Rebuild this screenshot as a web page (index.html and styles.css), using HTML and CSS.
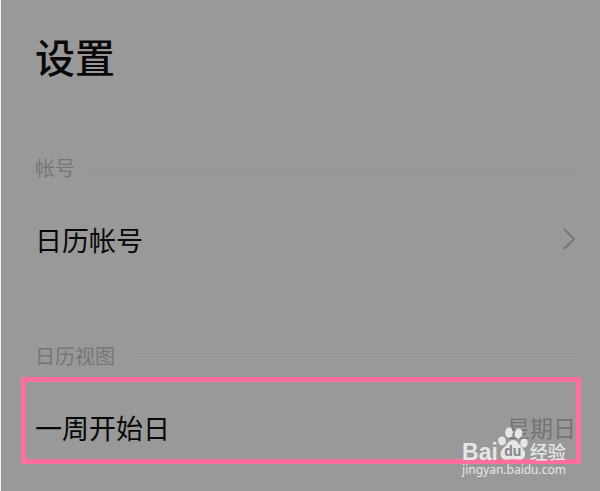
FILE: index.html
```html
<!DOCTYPE html>
<html lang="zh-CN">
<head>
<meta charset="utf-8">
<title>设置</title>
<link rel="stylesheet" href="styles.css">
</head>
<body>
<main class="settings">
  <h1 class="title">设置</h1>
  <section class="group">
    <h2 class="group-label">帐号</h2>
    <a class="row" href="#account">
      <span>日历帐号</span>
      <svg class="chevron" viewBox="0 0 14 24" aria-hidden="true"><path d="M2 2 12 12 2 22"/></svg>
    </a>
  </section>
  <section class="group">
    <h2 class="group-label">日历视图</h2>
    <a class="row marked" href="#week-start">
      <span>一周开始日</span>
      <span class="value">星期日</span>
    </a>
  </section>
</main>
<aside class="watermark">
  <div class="brand">
    <span class="latin">Bai</span>
    <span class="paw">
      <svg viewBox="0 0 30 34" aria-hidden="true">
        <ellipse cx="4" cy="14" rx="3.8" ry="4.4" transform="rotate(-12 4 14)"/>
        <ellipse cx="11" cy="5.5" rx="3.8" ry="5.2"/>
        <ellipse cx="20.500" cy="6.500" rx="3.8" ry="5.2" transform="rotate(12 20.500 6.500)"/>
        <ellipse cx="26" cy="16" rx="3.6" ry="4.5" transform="rotate(8 26 16)"/>
        <path d="M15 13c4 0 5.500 3.500 8 6.500 3 3 4.500 5.500 4 9-.5 3.500-3.500 4.500-6.500 4.200-3.500-.5-7.500-.5-11 0C5.500 33.200 3 31.500 2.500 28c-.5-3.500 1.500-6 4.500-8.500 3-3 4-6.500 8-6.500Z"/>
      </svg>
      <span class="du">du</span>
    </span>
    <span class="chinese">经验</span>
  </div>
  <div class="address">jingyan.baidu.com</div>
</aside>
</body>
</html>
```
FILE: styles.css
```css
* {
  box-sizing: border-box;
}

body {
  position: relative;
  min-height: 100vh;
  margin: 0;
  border-left: 1px solid #f4f4f4;
  background: #999;
  color: #080808;
  font-family: "Noto Sans CJK SC", sans-serif;
}

.settings {
  padding: 0 24px 0 34px;
}

.title {
  margin: 0 0 36px;
  font-size: 40px;
  font-weight: 500;
  line-height: 112px;
}

.group + .group {
  margin-top: 46px;
}

.group-label {
  display: flex;
  align-items: center;
  gap: 16px;
  margin: 0;
  color: #777;
  font-size: 20px;
  font-weight: 400;
  line-height: 40px;
}

.group-label::after {
  content: "";
  flex: 1;
  height: 1px;
  background: #949494;
}

.row {
  position: relative;
  display: flex;
  align-items: center;
  justify-content: space-between;
  height: 102px;
  color: inherit;
  font-size: 27px;
  text-decoration: none;
}

.chevron {
  width: 14px;
  height: 24px;
  fill: none;
  stroke: #777;
  stroke-width: 2;
}

.value {
  color: #747474;
  font-size: 23px;
}

.marked::after {
  content: "";
  position: absolute;
  top: 1px;
  right: -5px;
  bottom: 14px;
  left: -14px;
  border: 5px solid #ff6f9c;
}

.watermark {
  position: absolute;
  right: 34px;
  bottom: 13px;
  color: #e6e6e6;
}

.brand {
  display: flex;
  align-items: flex-end;
  height: 34px;
}

.latin {
  font: 700 23px/18px "Liberation Sans", sans-serif;
}

.paw {
  position: relative;
  width: 30px;
  height: 34px;
}

.paw svg {
  display: block;
  width: 100%;
  height: 100%;
  fill: #e6e6e6;
}

.du {
  position: absolute;
  right: 0;
  bottom: 3px;
  left: 0;
  color: #858585;
  font: 700 14px/14px "Liberation Sans", sans-serif;
  text-align: center;
}

.chinese {
  margin-left: 2px;
  font-size: 18px;
  font-weight: 500;
  line-height: 20px;
}

.address {
  font: 12px/17px "Noto Sans", sans-serif;
}
```
